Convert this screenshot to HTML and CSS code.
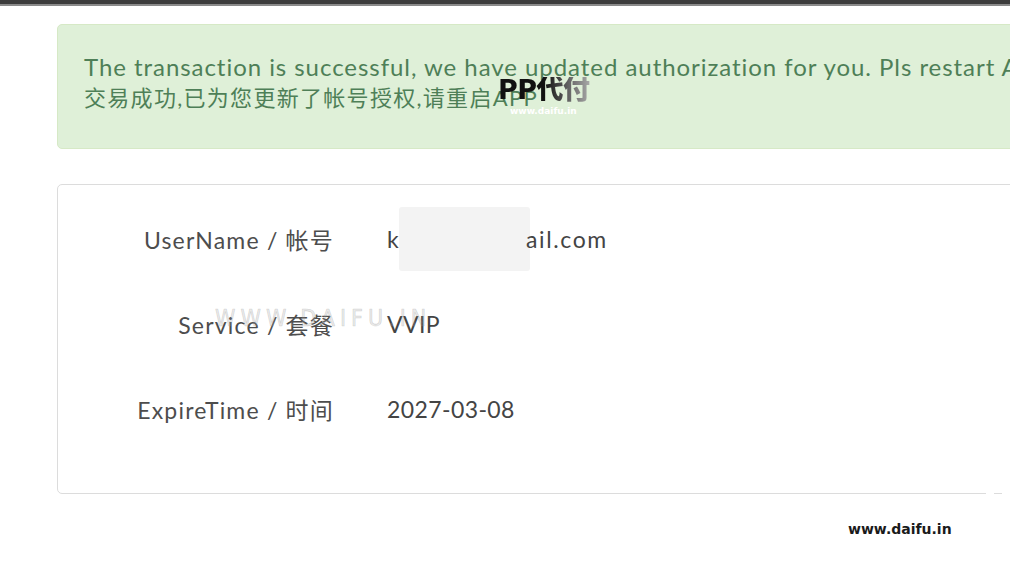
FILE: index.html
```html
<!DOCTYPE html>
<html>
<head>
<meta charset="utf-8">
<link rel="stylesheet" href="styles.css">
</head>
<body>
<div class="topbar"></div>
<main class="page">
  <div class="alert">
    <p class="alert-en">The transaction is successful, we have updated authorization for you. Pls restart APP</p>
    <p class="alert-cn">交易成功,已为您更新了帐号授权,请重启APP</p>
    <div class="wm-logo"><span class="wm-logo-big">PP代付</span><span class="wm-logo-small">www.daifu.in</span></div>
  </div>
  <div class="card">
    <div class="row">
      <div class="label">UserName / 帐号</div>
      <div class="value">k<span class="blur"></span><span class="rest">ail.com</span></div>
    </div>
    <div class="row">
      <div class="label">Service / 套餐</div>
      <div class="value">VVIP</div>
      <div class="wm-faint">WWW.DAIFU.IN</div>
    </div>
    <div class="row">
      <div class="label">ExpireTime / 时间</div>
      <div class="value">2027-03-08</div>
    </div>
    <div class="gap-marks"></div>
  </div>
</main>
<div class="wm-bottom">www.daifu.in</div>
</body>
</html>
```
FILE: styles.css
```css
html, body {
  margin: 0;
  padding: 0;
  background: #ffffff;
  overflow: hidden;
  width: 1010px;
  height: 572px;
  font-family: "Lato", "Noto Sans CJK SC", sans-serif;
}
.topbar {
  height: 4px;
  background: #3c3c3c;
  border-bottom: 2px solid #8a8a8a;
}
.page {
  padding: 18px 0 0 57px;
  width: 1100px;
}
.alert {
  position: relative;
  background: #dff0d8;
  border: 1px solid #d6e9c6;
  border-radius: 5px;
  height: 125px;
  padding: 27px 0 0 26px;
  box-sizing: border-box;
  color: #4e7f57;
}
.alert p {
  margin: 0;
  white-space: nowrap;
}
.alert-en {
  font-size: 24px;
  line-height: 30px;
  letter-spacing: 0.95px;
}
.alert-cn {
  font-size: 22px;
  line-height: 32px;
  letter-spacing: 1.3px;
}
.wm-logo {
  position: absolute;
  left: 440px;
  top: 52px;
  display: flex;
  flex-direction: column;
  align-items: flex-start;
}
.wm-logo-big {
  font-family: "DejaVu Sans", "Noto Sans CJK SC", sans-serif;
  font-weight: 900;
  font-size: 27px;
  line-height: 26px;
  letter-spacing: -0.5px;
  background: linear-gradient(90deg, #111 0%, #111 50%, #aaa 100%);
  -webkit-background-clip: text;
  background-clip: text;
  -webkit-text-fill-color: transparent;
}
.wm-logo-small {
  font-family: "DejaVu Sans", sans-serif;
  font-weight: bold;
  font-size: 9px;
  line-height: 10px;
  color: #ffffff;
  margin: 3px 0 0 12px;
}
.card {
  position: relative;
  margin-top: 35px;
  border: 1px solid #dcdcdc;
  border-radius: 5px;
  height: 310px;
  box-sizing: border-box;
  padding-top: 11px;
  color: #444;
}
.row {
  position: relative;
  display: flex;
  align-items: center;
  height: 85px;
  font-size: 22px;
}
.label {
  width: 276px;
  text-align: right;
  color: #4d4d4d;
  letter-spacing: 1.2px;
  font-size: 23px;
}
.value {
  margin-left: 53px;
  display: flex;
  align-items: center;
  color: #444;
  font-size: 23px;
  letter-spacing: 0.4px;
}
.blur {
  display: inline-block;
  width: 131px;
  height: 64px;
  background: #f3f3f3;
  margin: 0 -4px 0 0;
  border-radius: 3px;
}
.rest {
  margin-left: 0;
  letter-spacing: 1.6px;
}
.wm-faint {
  position: absolute;
  left: 157px;
  top: 24px;
  font-family: "DejaVu Sans Condensed", "DejaVu Sans", sans-serif;
  font-weight: 200;
  font-size: 23px;
  letter-spacing: 5px;
  color: rgba(160,160,160,0.22);
  -webkit-text-stroke: 0.6px rgba(140,140,140,0.35);
}
.gap-marks {
  position: absolute;
  right: -10px;
  bottom: -2px;
  width: 180px;
  height: 3px;
  background: repeating-linear-gradient(90deg, #fff 0 8px, transparent 8px 16px);
}
.wm-bottom {
  position: absolute;
  left: 848px;
  top: 521px;
  font-family: "DejaVu Sans", sans-serif;
  font-weight: bold;
  font-size: 14px;
  color: #1a1a1a;
}
```
